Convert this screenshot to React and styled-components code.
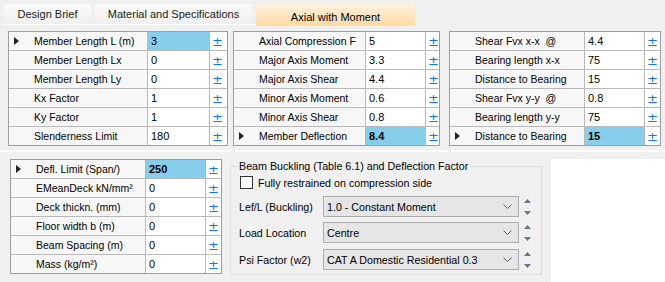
import React from "react";
import styled, { createGlobalStyle, css } from "styled-components";

const GlobalStyle = createGlobalStyle`
  html, body { margin: 0; padding: 0; background: #f0f0f0; }
  * { box-sizing: border-box; }
`;

const Window = styled.div`
  width: 665px;
  height: 282px;
  overflow: hidden;
  background: #f0f0f0;
  font-family: "Liberation Sans", Arial, sans-serif;
  font-size: 10.5px;
  color: #000;
  display: flex;
  flex-direction: column;
`;

const TabStrip = styled.div`
  height: 28px;
  display: flex;
  align-items: flex-start;
  gap: 4px;
  padding: 4px 0 0 4px;
  position: relative;
  &::after {
    content: "";
    position: absolute;
    left: 2px;
    top: 24px;
    width: 412px;
    height: 1px;
    background: #ffffff;
  }
`;

const Tab = styled.div`
  width: ${(p) => p.$w}px;
  height: 20px;
  display: flex;
  align-items: center;
  justify-content: center;
  font-size: 11px;
  color: #1a1a1a;
  background: linear-gradient(#fbfbfb, #f0f0f0);
  ${(p) =>
    p.$active &&
    css`
      height: 22px;
      padding-top: 3px;
      background: linear-gradient(#fff3df, #fdd9a3);
      color: #000;
      z-index: 1;
    `}
`;

const TopSection = styled.div`
  height: 123px;
  display: flex;
  align-items: flex-start;
  padding: 3px 0 0 8px;
  border-bottom: 1px solid #ffffff;
`;

const Panel = styled.div`
  margin-right: ${(p) => p.$gap || 0}px;
`;

const Grid = styled.div`
  border: 1px solid #9d9d9d;
  background: #f7f7f7;
`;

const Row = styled.div`
  display: grid;
  grid-template-columns: ${(p) => p.$cols};
  height: 19px;
  border-bottom: 1px solid #b9b9b9;
  &:last-child { border-bottom: none; height: 18px; }
`;

const LabelCell = styled.div`
  display: flex;
  align-items: center;
  white-space: pre;
  overflow: hidden;
`;

const Indicator = styled.span`
  width: 25px;
  flex: none;
  display: flex;
  align-items: center;
  padding-left: 5px;
`;

const ValueCell = styled.div`
  border-left: 1px solid #b9b9b9;
  display: flex;
  align-items: center;
  padding-left: 3px;
  font-size: 11px;
  background: ${(p) => (p.$hl ? "#87ceeb" : "#ffffff")};
  font-weight: ${(p) => (p.$bold ? 700 : 400)};
`;

const PlusCell = styled.div`
  border-left: 1px solid #b9b9b9;
  background: #ffffff;
  color: #0a7be0;
  display: flex;
  align-items: center;
  padding-left: 2px;
  font-size: 13px;
  font-family: "DejaVu Sans", sans-serif;
  line-height: 1;
`;

const BottomSection = styled.div`
  flex: 1;
  display: flex;
  align-items: flex-start;
  padding: 7px 0 0 10px;
  border-top: 1px solid #ffffff;
`;

const GroupBox = styled.fieldset`
  margin: 0 0 0 8px;
  width: 312px;
  height: 116px;
  border: 1px solid #dcdcdc;
  padding: 0 0 0 8px;
  display: flex;
  flex-direction: column;
  font-size: 10.7px;
  & > legend {
    padding: 0 2px 0 1px;
    margin-left: -1px;
    line-height: 14px;
  }
`;

const CheckRow = styled.label`
  display: flex;
  align-items: center;
  gap: 5px;
  height: 15px;
  margin-top: 2px;
  margin-left: 1px;
`;

const CheckBox = styled.span`
  width: 13px;
  height: 13px;
  border: 1px solid #333;
  background: #fff;
`;

const ComboRow = styled.div`
  display: flex;
  align-items: center;
  height: 21px;
  margin-top: ${(p) => p.$mt}px;
`;

const ComboLabel = styled.span`
  width: 84px;
  white-space: nowrap;
`;

const Combo = styled.div`
  width: 196px;
  height: 21px;
  border: 1px solid #adadad;
  background: #e5e5e5;
  display: flex;
  align-items: center;
  justify-content: space-between;
  padding: 0 6px 0 3px;
`;

const Spin = styled.div`
  width: 14px;
  height: 21px;
  display: flex;
  flex-direction: column;
  justify-content: space-between;
  align-items: center;
  padding: 3px 0 2px 2px;
`;

const WhitePane = styled.div`
  flex: 1;
  align-self: stretch;
  margin-left: 9px;
  background: #ffffff;
`;

const Arrow = () => (
  <svg width="5" height="8" viewBox="0 0 5 8">
    <path d="M0 0 L5 4 L0 8 Z" fill="#222" />
  </svg>
);

const Chevron = () => (
  <svg width="9" height="5" viewBox="0 0 9 5">
    <path d="M0.5 0.5 L4.5 4.5 L8.5 0.5" fill="none" stroke="#606060" strokeWidth="1" />
  </svg>
);

const SpinUp = () => (
  <svg width="7" height="4" viewBox="0 0 7 4">
    <path d="M0 4 L3.5 0 L7 4 Z" fill="#5c7896" />
  </svg>
);
const SpinDown = () => (
  <svg width="7" height="4" viewBox="0 0 7 4">
    <path d="M0 0 L3.5 4 L7 0 Z" fill="#5c7896" />
  </svg>
);

function PropGrid({ cols, rows, gap }) {
  const tmpl = `${cols[0]}px ${cols[1]}px ${cols[2]}px`;
  return (
    <Panel $gap={gap}>
      <Grid>
        {rows.map((r, i) => (
          <Row key={i} $cols={tmpl}>
            <LabelCell>
              <Indicator>{r.sel ? <Arrow /> : null}</Indicator>
              {r.label}
            </LabelCell>
            <ValueCell $hl={r.sel} $bold={r.sel && !r.plain}>{r.value}</ValueCell>
            <PlusCell>±</PlusCell>
          </Row>
        ))}
      </Grid>
    </Panel>
  );
}

const grid1 = [
  { label: "Member Length L (m)", value: "3", sel: true, plain: true },
  { label: "Member Length Lx", value: "0" },
  { label: "Member Length Ly", value: "0" },
  { label: "Kx Factor", value: "1" },
  { label: "Ky Factor", value: "1" },
  { label: "Slenderness Limit", value: "180" },
];
const grid2 = [
  { label: "Axial Compression F", value: "5" },
  { label: "Major Axis Moment", value: "3.3" },
  { label: "Major Axis Shear", value: "4.4" },
  { label: "Minor Axis Moment", value: "0.6" },
  { label: "Minor Axis Shear", value: "0.8" },
  { label: "Member Deflection", value: "8.4", sel: true },
];
const grid3 = [
  { label: "Shear Fvx x-x  @", value: "4.4" },
  { label: "Bearing length x-x", value: "75" },
  { label: "Distance to Bearing", value: "15" },
  { label: "Shear Fvx y-y  @", value: "0.8" },
  { label: "Bearing length y-y", value: "75" },
  { label: "Distance to Bearing", value: "15", sel: true },
];
const grid4 = [
  { label: "Defl. Limit (Span/)", value: "250", sel: true },
  { label: "EMeanDeck kN/mm²", value: "0" },
  { label: "Deck thickn. (mm)", value: "0" },
  { label: "Floor width b (m)", value: "0" },
  { label: "Beam Spacing (m)", value: "0" },
  { label: "Mass (kg/m²)", value: "0" },
];

export default function App() {
  return (
    <Window>
      <GlobalStyle />
      <TabStrip>
        <Tab $w={87}>Design Brief</Tab>
        <Tab $w={157}>Material and Specifications</Tab>
        <Tab $w={159} $active>Axial with Moment</Tab>
      </TabStrip>
      <TopSection>
        <PropGrid cols={[138, 62, 18]} rows={grid1} gap={5} />
        <PropGrid cols={[131, 60, 14]} rows={grid2} gap={9} />
        <PropGrid cols={[134, 60, 16]} rows={grid3} />
      </TopSection>
      <BottomSection>
        <PropGrid cols={[134, 60, 16]} rows={grid4} />
        <GroupBox>
          <legend>Beam Buckling (Table 6.1) and Deflection Factor</legend>
          <CheckRow>
            <CheckBox />
            Fully restrained on compression side
          </CheckRow>
          <ComboRow $mt={6}>
            <ComboLabel>Lef/L (Buckling)</ComboLabel>
            <Combo>1.0 - Constant Moment<Chevron /></Combo>
            <Spin><SpinUp /><SpinDown /></Spin>
          </ComboRow>
          <ComboRow $mt={5}>
            <ComboLabel>Load Location</ComboLabel>
            <Combo>Centre<Chevron /></Combo>
            <Spin><SpinUp /><SpinDown /></Spin>
          </ComboRow>
          <ComboRow $mt={6}>
            <ComboLabel>Psi Factor (w2)</ComboLabel>
            <Combo>CAT A Domestic Residential 0.3<Chevron /></Combo>
            <Spin><SpinUp /><SpinDown /></Spin>
          </ComboRow>
        </GroupBox>
        <WhitePane />
      </BottomSection>
    </Window>
  );
}
